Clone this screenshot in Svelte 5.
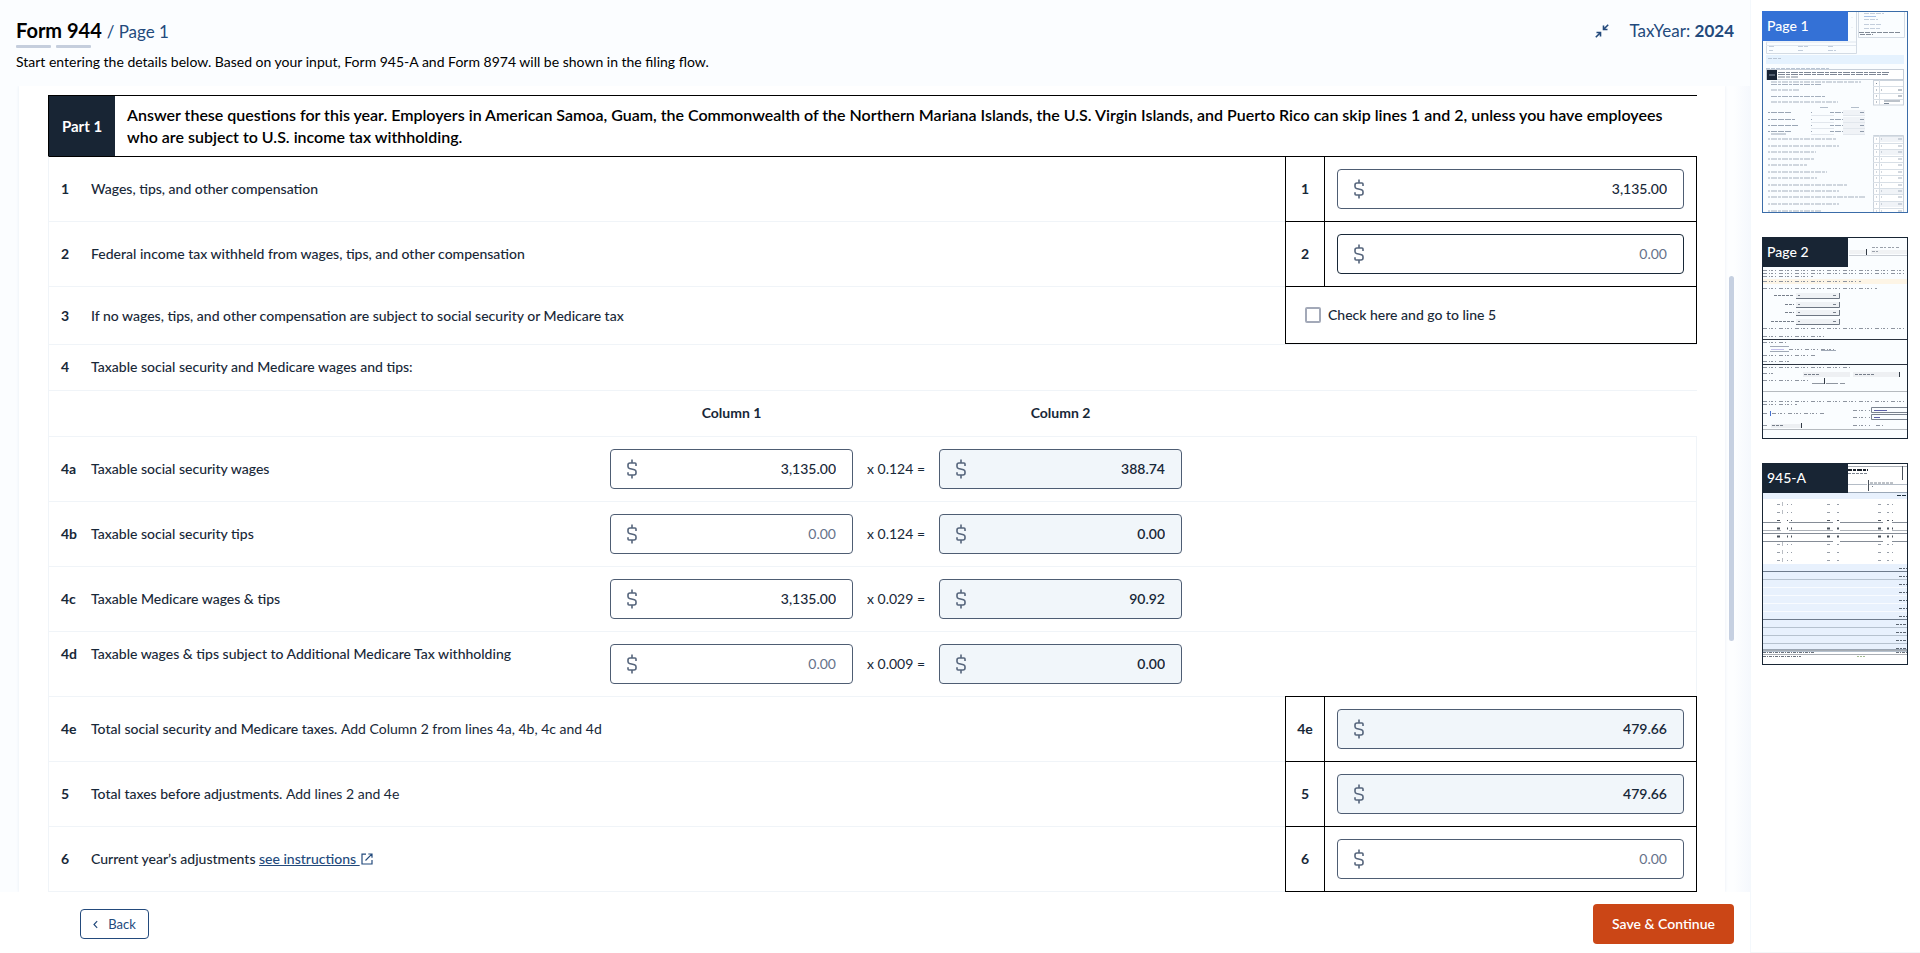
<script>
  const columnLines = [
    { id: '4a', text: 'Taxable social security wages', value: '3,135.00', rate: 'x 0.124 =', result: '388.74' },
    { id: '4b', text: 'Taxable social security tips', value: '', rate: 'x 0.124 =', result: '0.00' },
    { id: '4c', text: 'Taxable Medicare wages & tips', value: '3,135.00', rate: 'x 0.029 =', result: '90.92' },
    { id: '4d', text: 'Taxable wages & tips subject to Additional Medicare Tax withholding', value: '', rate: 'x 0.009 =', result: '0.00', top: true }
  ];

  // Page 1 preview: line y, label width, whether the amount box is shaded
  const p1Lines = [
    [127, 66, 1], [134, 68, 0], [140, 45, 1], [147, 43, 0], [153, 36, 0], [160, 56, 0], [166, 46, 0],
    [173, 76, 0], [179, 68, 1], [185, 95, 0], [192, 68, 1], [199, 50, 0]
  ];
  const bands = [0, 1, 2, 3, 4, 5, 6, 7, 8, 9, 10];
  const gridRows = [41, 49, 57, 65, 73, 81, 89, 97];
</script>

{#snippet money(id, value, kind, readonly)}
  <div class="money {kind}">
    <svg class="dollar" viewBox="0 0 10 20" aria-hidden="true">
      <path d="M5 0.500V4M5 16v3.500M9 7V5Q9 4 8 4H3Q1 4 1 6V7.500Q1 9 2.500 9.500L7.500 10.700Q9 11.200 9 12.700V14Q9 16 7 16H2Q1 16 1 15V13.300" />
    </svg>
    <input {id} type="text" {value} placeholder="0.00" {readonly} />
  </div>
{/snippet}

<div class="page">
  <main>
    <header>
      <div class="title-row">
        <h1>Form 944 <span>/ Page 1</span></h1>
        <div class="year">
          <button class="collapse" aria-label="Collapse">
            <svg viewBox="0 0 14 14" aria-hidden="true">
              <path d="M8.500 1.500v4H12.500M8.700 5.300L13.200 0.800M1.500 8.500h4V12.500M5.300 8.700L0.800 13.200" />
            </svg>
          </button>
          <span>TaxYear: <b>2024</b></span>
        </div>
      </div>
      <div class="dashes"><i></i><i></i></div>
      <p>Start entering the details below. Based on your input, Form 945-A and Form 8974 will be shown in the filing flow.</p>
    </header>

    <div class="body">
      <div class="sheet">
        <section class="form">
          <div class="part">
            <div class="part-tag">Part 1</div>
            <h2>Answer these questions for this year. Employers in American Samoa, Guam, the Commonwealth of the Northern Mariana Islands, the U.S. Virgin Islands, and Puerto Rico can skip lines 1 and 2, unless you have employees who are subject to U.S. income tax withholding.</h2>
          </div>

          <div class="row first">
            <label class="line" for="l1"><b>1</b><span>Wages, tips, and other compensation</span></label>
            <div class="num">1</div>
            <div class="amount">{@render money('l1', '3,135.00', '', false)}</div>
          </div>
          <div class="row">
            <label class="line" for="l2"><b>2</b><span>Federal income tax withheld from wages, tips, and other compensation</span></label>
            <div class="num">2</div>
            <div class="amount">{@render money('l2', '', 'strong', false)}</div>
          </div>
          <div class="row check-row">
            <div class="line"><b>3</b><span>If no wages, tips, and other compensation are subject to social security or Medicare tax</span></div>
            <div class="check">
              <input id="l3" type="checkbox" />
              <label for="l3">Check here and go to line 5</label>
            </div>
          </div>
          <div class="row short">
            <div class="line"><b>4</b><span>Taxable social security and Medicare wages and tips:</span></div>
          </div>
          <div class="row short cols heads">
            <div></div>
            <div>Column 1</div>
            <div></div>
            <div>Column 2</div>
          </div>
          {#each columnLines as l}
            <div class="row cols" class:top={l.top}>
              <label class="line" for={l.id}><b>{l.id}</b><span>{l.text}</span></label>
              {@render money(l.id, l.value, '', false)}
              <label class="rate" for="{l.id}-r">{l.rate}</label>
              {@render money(l.id + '-r', l.result, 'calc', true)}
            </div>
          {/each}
          <div class="row">
            <label class="line" for="l4e"><b>4e</b><span>Total social security and Medicare taxes. <em>Add Column 2 from lines 4a, 4b, 4c and 4d</em></span></label>
            <div class="num">4e</div>
            <div class="amount">{@render money('l4e', '479.66', 'calc', true)}</div>
          </div>
          <div class="row">
            <label class="line" for="l5"><b>5</b><span>Total taxes before adjustments. <em>Add lines 2 and 4e</em></span></label>
            <div class="num">5</div>
            <div class="amount">{@render money('l5', '479.66', 'calc', true)}</div>
          </div>
          <div class="row last">
            <div class="line">
              <b>6</b>
              <span>
                <label for="l6">Current year’s adjustments</label>
                <a href="#instructions">see instructions&nbsp;</a>
                <svg class="ext" viewBox="0 0 12 12" aria-hidden="true">
                  <path d="M5 1.200H1V11h10V7M7.300 1H11v3.700M10.800 1.200L4.500 7.500" />
                </svg>
              </span>
            </div>
            <div class="num">6</div>
            <div class="amount">{@render money('l6', '', '', false)}</div>
          </div>
        </section>
      </div>
      <div class="track"><div class="thumb"></div></div>
    </div>

    <footer>
      <button class="back">
        <svg viewBox="0 0 6 10" aria-hidden="true"><path d="M5 1L1.200 5L5 9" /></svg>
        Back
      </button>
      <button class="save">Save &amp; Continue</button>
    </footer>
  </main>

  <aside>
    <a class="preview current" href="#page-1">
      <svg viewBox="0 0 144 200" aria-hidden="true">
        <rect width="144" height="200" fill="#fafdff" />
        <path d="M3.500 30v11.500H93.500V0M95.500 0V25.500H141.500V0" fill="none" stroke="#d3dbe4" />
        <path d="M3 33.500H93M3 30H93M89 5v1M89 15v1" stroke="#dfe6ee" />
        <g stroke="#c3cedc" stroke-dasharray="5 1">
          <path d="M101 1.500h20M101 7.500h14M101 12.500h18M101 16.500h16M6 34.500h6M35 34.500h10M65 34.500h6M6 38.500h4M35 38.500h5M65 38.500h8" />
        </g>
        <path d="M101 4.500h12" stroke="#a9c2e6" />
        <path d="M96 20.500H138M97 22.500H110" stroke="#818a96" stroke-dasharray="5 1" />
        <rect x="3" y="43" width="138" height="9" fill="#e5f2fe" />
        <path d="M5 46.500h13M3 56.500H66" stroke="#b9c5d4" stroke-dasharray="4 1" />
        <rect x="3.500" y="57.500" width="137" height="10" fill="#fff" stroke="#c6ced8" />
        <rect x="4" y="58" width="10" height="10" fill="#182434" />
        <path d="M6 63h6" stroke="#8b98a8" />
        <path d="M15 60.500H126M15 62.500H125M15 65H36" stroke="#7d8694" stroke-dasharray="7 1 4 1" />
        <path d="M8 70H98M8 72.500H58M8 78H36M8 84.500H62M8 90H75" stroke="#a5b0be" stroke-dasharray="6 1 3 1" />
        <rect x="110.500" y="68.500" width="30" height="24.500" fill="#fff" stroke="#cbd3dc" />
        <path d="M110 74.500h30M110 81.500h30M110 87.500h30M116.500 68V93" stroke="#d8dfe6" />
        <path d="M113 71.500h1M113 78h1M118 78h1M135 78h4M113 84h1M135 84h4M113 90h1M121 89h16M121 91.500h5" stroke="#7b8796" />
        <path d="M57 95.500h8M88 95.500h8" stroke="#b3becb" />
        {#each [100, 107, 113, 119] as y, i}
          <path d="M5 {y}.500h2M8 {y}.500h{20 + (i % 3) * 4}M48 {y}.500h1M67 {y}.500h4M72 {y}.500h8" stroke="#9aa6b5" stroke-dasharray="6 1" />
          <rect x="80" y={y - 2} width="22" height="5" fill="#f0f3f7" />
          <path d="M48 {y + 3}.500h23M80 {y + 3}.500h22" stroke="#e2e7ed" />
          <path d="M97 {y}.500h4" stroke="#8f9bab" />
        {/each}
        <path d="M8 122h15" stroke="#9aa6b5" />
        <path d="M110.500 200V123.500H140.500V200" fill="#fff" stroke="#cbd3dc" />
        {#each p1Lines as [y, w, shaded]}
          {#if shaded}<rect x="117" y={y - 3} width="23" height="6" fill="#f0f3f7" />{/if}
          <path d="M110 {y - 3}.500h30" stroke="#d8dfe6" />
          <path d="M5 {y}h2M8 {y}h{w}M113 {y}h1M118 {y}h1M135 {y}h4" stroke="#a5b0be" stroke-dasharray="6 1 3 1" />
        {/each}
        <path d="M116.500 123V200" stroke="#d8dfe6" />
      </svg>
      <span>Page 1</span>
    </a>
    <a class="preview" href="#page-2">
      <svg viewBox="0 0 144 200" aria-hidden="true">
        <rect width="144" height="200" fill="#fafdff" />
        <path d="M86 14h18M108 14h36" stroke="#f0f2f4" stroke-width="4" />
        <path d="M103.500 11v6" stroke="#333b46" />
        <path d="M109 9.500h27M109 13.500h7" stroke="#9aa1ab" stroke-dasharray="3 1 2 2" />
        <path d="M86 17.500h58" stroke="#c9ced5" />
        <rect y="41" width="144" height="5" fill="#fdf5e6" />
        <g stroke="#8d949f" stroke-dasharray="4 2 1 1 2 2 1 3">
          <path d="M0 32.500H144M0 35.500H144M0 38.500H50M0 43.500H98M0 50.500H114M0 90.500H144M0 98.500H64M0 104.500h23M26 111.500h46M0 117.500h53M0 123.500h26M0 129.500H88M0 135.500h12M0 142.500h48M0 163.500H144M0 166.500h34M0 175.500h5M9 175.500h52M0 187.500h5M90 172.500h17M90 179.500h17M90 187.500h17M113 187.500h8" />
        </g>
        {#each [[11, 57], [22, 66], [22, 74], [8, 83]] as [x, y]}
          <rect x="33" y={y - 2} width="44" height="5" fill="#eff2f5" />
          <path d="M{x} {y}.500H31M35 {y}.500h2M70 {y}.500h4" stroke="#777f8b" stroke-dasharray="3 1" />
          <path d="M33 {y + 3}.500H76.500V{y - 2}" fill="none" stroke="#6d7682" />
        {/each}
        <path d="M0 101.500H144M0 126.500H144" stroke="#2c3440" />
        <path d="M0 153.500H144M0 191.500H144" stroke="#b5babf" />
        <path d="M7 108.500h19M7 113.500h19M58 112.500h15" stroke="#a0a9b6" />
        <path d="M8 111.500h13" stroke="#c3c0ec" />
        <path d="M40 136.500h47M90 136.500h47" stroke="#eef0f3" stroke-width="5" />
        <path d="M41 136.500h15M92 136.500h19" stroke="#777f8b" stroke-dasharray="3 1" />
        <path d="M136.500 134v5M61.500 140v6M38.500 185v5" stroke="#333b46" />
        <path d="M49 145.500h33" stroke="#8f96a0" stroke-dasharray="12 2" />
        <path d="M7.500 173v5" stroke="#4470cf" />
        <path d="M144 169.500H108.500V174.500H144M144 176.500H108.500V181.500H144" fill="none" stroke="#7a838f" />
        <path d="M111 172.500h13M111 179.500h6" stroke="#5b5fa6" />
        <path d="M8 188h30" stroke="#edf0f3" stroke-width="4" />
        <path d="M9 187.500h12" stroke="#777f8b" stroke-dasharray="3 1" />
      </svg>
      <span>Page 2</span>
    </a>
    <a class="preview" href="#945-a">
      <svg viewBox="0 0 144 200" aria-hidden="true">
        <rect width="144" height="200" fill="#fff" />
        <path d="M84 2.500H144" stroke="#a9aeb5" />
        <path d="M84 6h21" stroke="#1b222c" stroke-width="2" stroke-dasharray="5 1 3 1" />
        <path d="M85 9.500h20M107 19h24M109 22.500h1" stroke="#7d8590" stroke-dasharray="3 1" />
        <path d="M139.500 2v14M105.500 16v11" stroke="#4b525c" />
        <path d="M84 20.500h20M106 20.500h38" stroke="#b4bcc6" />
        <rect y="29" width="144" height="6" fill="#e8f1fd" />
        <path d="M0 28.500H144" stroke="#9ba8b8" />
        <path d="M134 31.500h10" stroke="#20303f" stroke-dasharray="4 1" />
        <path d="M0 58.500H18M26 58.500H70M77 58.500H120M129 58.500H144M0 69.500H144M0 77.500H70M77 77.500H120M129 77.500H144" stroke="#858c96" />
        <path d="M0 66.500H18M26 66.500H70M77 66.500H120M129 66.500H144" stroke="#aeb3ba" />
        {#each gridRows as y, i}
          <path d="M14 {y - 1}.500h3M24 {y - 1}.500h1M28 {y - 1}.500h1M64 {y - 1}.500h3M74 {y - 1}.500h2M115 {y - 1}.500h3M124 {y - 1}.500h2M129 {y - 1}.500h1" stroke={i > 1 && i < 5 ? '#4b525c' : '#979ea8'} stroke-width={i > 2 && i < 5 ? 2 : 1} />
          {#if i < 2 || i > 4}<path d="M19.500 {y - 3}v4" stroke="#b9bdc3" />{/if}
        {/each}
        <rect y="100" width="144" height="86" fill="#e8f1fd" />
        {#each bands as i}
          <path d="M0 {107 + i * 8}.500H144" stroke={[0, 6].includes(i) ? '#6e7b8c' : i === 1 || i > 6 ? '#b6c2cf' : '#f8fbff'} />
          <path d="M{i > 6 ? 133 : 136} {104 + i * 8}.500H144" stroke="#5a6470" stroke-dasharray="3 1 2 1" />
        {/each}
        <path d="M0 186H144" stroke="#4f5a68" />
        <path d="M0 188.500h52M0 192.500h38M133 188.500h11" stroke="#6b727c" stroke-dasharray="3 1 1 1" />
        <path d="M94 192.500h9" stroke="#a2bb90" stroke-dasharray="2 1" />
        <path d="M0 190.500H144" stroke="#aaaeb4" />
      </svg>
      <span>945-A</span>
    </a>
  </aside>
</div>

<style>
  :global(body) {
    margin: 0;
    background: #fff;
  }
  .page {
    display: flex;
    min-height: 100vh;
    font-family: Lato, "Liberation Sans", sans-serif;
    font-size: 14px;
    line-height: 22px;
    color: #182838;
  }
  .page :global(*) {
    box-sizing: border-box;
  }
  button,
  input {
    font: inherit;
  }
  main {
    flex: 1;
    min-width: 0;
    display: flex;
    flex-direction: column;
    background: #fbfdff;
  }
  header {
    padding: 16px 16px 13px;
    color: #000;
  }
  .title-row {
    display: flex;
    justify-content: space-between;
    align-items: center;
    height: 29px;
  }
  h1 {
    margin: 0;
    font-size: 20px;
    line-height: 28px;
    font-weight: 700;
  }
  h1 span {
    font-size: 17px;
    font-weight: 400;
    color: #234a7c;
  }
  .dashes {
    display: flex;
    gap: 5px;
  }
  .dashes i {
    width: 35px;
    height: 3px;
    border-radius: 1px;
    background: #c5cedd;
  }
  header p {
    margin: 3px 0 0;
  }
  .year {
    display: flex;
    align-items: center;
    gap: 20px;
    font-size: 17px;
    color: #234a7c;
  }
  .collapse {
    display: flex;
    padding: 0;
    border: 0;
    background: none;
  }
  .collapse svg {
    width: 14px;
    height: 14px;
    fill: none;
    stroke: #234a7c;
    stroke-width: 1.6;
  }
  .body {
    display: flex;
  }
  .sheet {
    flex: 1;
    min-width: 0;
    margin-left: 19px;
    padding: 9px 28px 0 29px;
    background: #fff;
    box-shadow: 0 0 3px #e6edf4;
    clip-path: inset(0 -4px 0 -4px);
  }
  .track {
    width: 25px;
    padding: 190px 0 0 4px;
    background: linear-gradient(90deg, #fdfeff 35%, #f5f8fd);
  }
  .thumb {
    width: 5px;
    height: 365px;
    border-radius: 3px;
    background: #c6d0e1;
  }
  .part {
    display: flex;
    min-height: 61px;
    border-top: 1px solid #000;
  }
  .part-tag {
    width: 67px;
    display: flex;
    align-items: center;
    justify-content: center;
    border-left: 1px solid #000;
    background: #182534;
    color: #fff;
    font-size: 15px;
    font-weight: 700;
  }
  h2 {
    flex: 1;
    margin: 0;
    padding: 8px 12px;
    font-size: 16px;
    line-height: 22px;
    font-weight: 600;
    color: #000;
  }
  .row {
    display: grid;
    grid-template-columns: 1fr 39px 373px;
    height: 65px;
    border-top: 1px solid #f0f4f8;
    border-left: 1px solid #f0f4f8;
  }
  .first {
    border-top-color: #000;
  }
  .line {
    display: flex;
    align-items: center;
    padding-left: 12px;
    font-weight: 500;
  }
  .line b {
    width: 30px;
    font-weight: 700;
  }
  .line em {
    font-style: normal;
    font-weight: 400;
  }
  .num,
  .amount,
  .check {
    margin-top: -1px;
    border-top: 1px solid #000;
    border-left: 1px solid #000;
    display: flex;
    align-items: center;
  }
  .num {
    justify-content: center;
    font-weight: 700;
  }
  .amount {
    padding: 0 12px;
    border-right: 1px solid #000;
  }
  .last {
    height: 66px;
    border-bottom: 1px solid #f0f4f8;
  }
  .last .num,
  .last .amount {
    margin-bottom: -1px;
    border-bottom: 1px solid #000;
  }
  .check-row {
    grid-template-columns: 1fr 412px;
    height: 58px;
  }
  .check {
    gap: 7px;
    padding-left: 19px;
    border-right: 1px solid #000;
    border-bottom: 1px solid #000;
    font-weight: 500;
  }
  .check input {
    appearance: none;
    width: 16px;
    height: 16px;
    margin: 0;
    border: 2px solid #a3a9b8;
    border-radius: 2px;
    background: #fff;
  }
  .short {
    grid-template-columns: 1fr;
    height: 46px;
    padding-bottom: 2px;
  }
  .cols {
    grid-template-columns: 561px 243px 86px 243px;
    align-items: center;
    border-right: 1px solid #f0f4f8;
  }
  .heads {
    border-right: 0;
    text-align: center;
    font-weight: 700;
  }
  .top .line {
    align-self: start;
    padding-top: 11px;
  }
  .rate {
    text-align: center;
  }
  .money {
    display: flex;
    align-items: center;
    width: 100%;
    height: 40px;
    padding: 0 16px;
    border: 1px solid #4e5d73;
    border-radius: 4px;
    background: #fff;
  }
  .strong {
    border-color: #182838;
  }
  .calc {
    background: #f1f6fa;
  }
  .dollar {
    flex: none;
    width: 10px;
    height: 20px;
    fill: none;
    stroke: #56657c;
    stroke-width: 1.6;
  }
  .money input {
    flex: 1;
    min-width: 0;
    padding: 0;
    border: 0;
    outline: 0;
    background: none;
    text-align: right;
    font-weight: 500;
    color: #182838;
  }
  .money input::placeholder {
    color: #66728a;
    font-weight: 400;
    opacity: 1;
  }
  .calc input {
    font-weight: 600;
  }
  a {
    color: #234a7c;
  }
  .ext {
    width: 12px;
    height: 12px;
    margin-left: -2px;
    vertical-align: -1px;
    fill: none;
    stroke: #234a7c;
    stroke-width: 1.2;
  }
  footer {
    flex: 1;
    display: flex;
    justify-content: space-between;
    align-items: flex-start;
    padding: 12px 16px 9px 80px;
    background: #fff;
  }
  .back {
    display: flex;
    align-items: center;
    justify-content: center;
    gap: 10px;
    width: 69px;
    height: 30px;
    margin-top: 5px;
    padding: 0;
    border: 1px solid #234a7c;
    border-radius: 4px;
    background: #fff;
    color: #234a7c;
    font-size: 13px;
  }
  .back svg {
    width: 5px;
    height: 9px;
    fill: none;
    stroke: #234a7c;
    stroke-width: 1.4;
  }
  .save {
    width: 141px;
    height: 40px;
    padding: 0;
    border: 0;
    border-radius: 4px;
    background: #cb4616;
    color: #fff;
    font-weight: 600;
  }
  aside {
    display: flex;
    flex-direction: column;
    gap: 24px;
    width: 170px;
    padding: 11px 12px 11px 11px;
    border-left: 1px solid #f4f8fc;
    border-bottom: 1px solid #f4f6f8;
    background: #fff;
  }
  .preview {
    position: relative;
    display: block;
    height: 202px;
    border: 1px solid #182534;
    color: #fff;
    text-decoration: none;
  }
  .preview svg {
    display: block;
    width: 100%;
    height: 200px;
  }
  .preview span {
    position: absolute;
    top: -1px;
    left: -1px;
    width: 86px;
    height: 30px;
    padding-left: 5px;
    background: #182534;
    line-height: 30px;
    font-weight: 500;
  }
  .current {
    border-color: #3a6ca8;
  }
  .current span {
    background: #3471d6;
  }
</style>
